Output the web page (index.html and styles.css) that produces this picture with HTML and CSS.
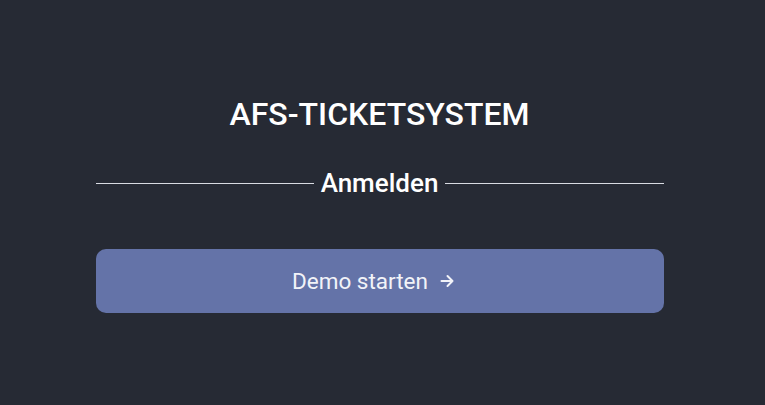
FILE: index.html
```html
<!DOCTYPE html>
<html lang="de">
<head>
<meta charset="utf-8">
<title>AFS-Ticketsystem</title>
<link rel="stylesheet" href="styles.css">
</head>
<body>
<main class="login">
  <h1 class="title">AFS-TICKETSYSTEM</h1>
  <div class="divider"><span class="divider-line"></span><span class="divider-text">Anmelden</span><span class="divider-line"></span></div>
  <button class="demo-btn" type="button">
    <span>Demo starten</span>
    <svg class="arrow" width="18" height="18" viewBox="0 0 18 18" fill="none" stroke="currentColor" stroke-width="2" stroke-linecap="round" stroke-linejoin="round"><path d="M3.5 9h11M9.5 4l5 5-5 5"/></svg>
  </button>
</main>
</body>
</html>
```
FILE: styles.css
```css
html, body {
  margin: 0;
  height: 100%;
}
body {
  background: #262a34;
  font-family: Roboto, "Noto Sans", sans-serif;
  color: #fff;
  padding-right: 6px;
  box-sizing: border-box;
}
.login {
  width: 568px;
  margin: 0 auto;
  padding-top: 96px;
  display: flex;
  flex-direction: column;
  align-items: stretch;
}
.title {
  margin: 0;
  text-align: center;
  font-size: 32px;
  font-weight: 500;
  line-height: 36px;
}
.divider {
  margin-top: 38px;
  display: flex;
  align-items: center;
  gap: 7px;
  height: 26px;
}
.divider-line {
  flex: 1;
  height: 1px;
  background: #d8dbe2;
}
.divider-text {
  font-size: 26px;
  font-weight: 500;
  line-height: 26px;
}
.demo-btn {
  margin-top: 53px;
  height: 64px;
  border: 0;
  border-radius: 10px;
  background: #6473a8;
  color: #f2f3f8;
  font-family: inherit;
  font-size: 22.5px;
  font-weight: 400;
  display: flex;
  align-items: center;
  justify-content: center;
  gap: 10px;
  padding: 0 11px 0 0;
  cursor: pointer;
}
.arrow {
  display: block;
}
```
